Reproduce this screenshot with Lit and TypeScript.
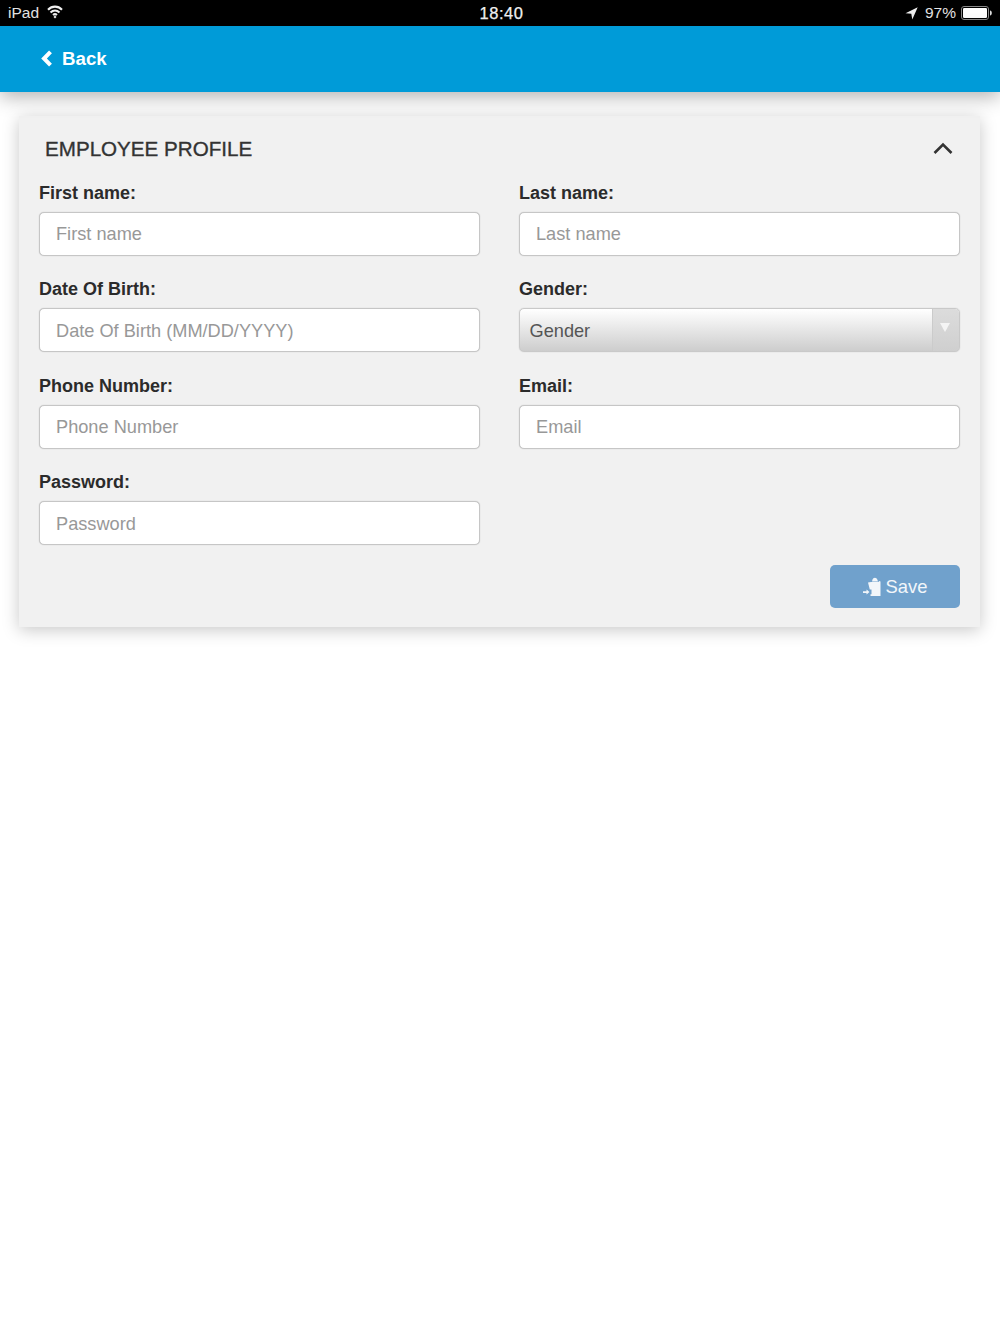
import { LitElement, html, css } from "lit";
import { customElement } from "lit/decorators.js";

const fields = [
  { label: "First name:", ph: "First name" },
  { label: "Last name:", ph: "Last name" },
  { label: "Date Of Birth:", ph: "Date Of Birth (MM/DD/YYYY)" },
  { label: "Gender:", select: true, ph: "Gender" },
  { label: "Phone Number:", ph: "Phone Number" },
  { label: "Email:", ph: "Email" },
  { label: "Password:", ph: "Password" },
];

@customElement("app-root")
export class AppRoot extends LitElement {
  static styles = css`
    :host { display: block; width: 1000px; height: 1334px; background: #fff; font-family: "Liberation Sans", Arial, sans-serif; color: #333; overflow: hidden; }
    * { box-sizing: border-box; }
    svg { display: block; }
    .status { height: 26px; background: #000; color: #e4e4e4; display: flex; align-items: center; justify-content: space-between; padding: 0 8px; position: relative; font-size: 15.5px; }
    .status .left, .status .right { display: flex; align-items: center; }
    .status .left { gap: 8px; }
    .status .time { position: absolute; left: 3px; right: 0; text-align: center; font-size: 16.5px; letter-spacing: .5px; color: #f2f2f2; -webkit-text-stroke: .25px #f2f2f2; }
    .status .right { gap: 7px; }
    .header { height: 66px; background: #009bd8; display: flex; align-items: center; padding-left: 40px; gap: 9px; color: #fff; font-weight: 700; font-size: 18.7px; box-shadow: 0 5px 18px rgba(0,0,0,.3); position: relative; }
    .card { margin: 24px 20px 0 19px; height: 511px; background: #f1f1f1; box-shadow: 0 3px 16px rgba(0,0,0,.22); padding: 0 20px; display: flex; flex-direction: column; }
    .title { height: 64.75px; flex: none; padding: 1px 7px 0 6px; display: flex; align-items: center; justify-content: space-between; font-size: 20.6px; color: #333; -webkit-text-stroke: .35px #333; }
    .grid { display: grid; grid-template-columns: 441px 441px; column-gap: 39px; row-gap: 10.5px; }
    .field { display: flex; flex-direction: column; height: 86px; }
    label { display: block; height: 31px; font-weight: 700; font-size: 18px; line-height: 24px; color: #2b2b2b; }
    .input { height: 44px; background: #fff; border: 1px solid #c6c6c6; box-shadow: 0 0 1px #b5b5b5; border-radius: 5px; padding: 2px 0 0 16px; display: flex; align-items: center; font-size: 18.2px; color: #989898; }
    .select { height: 44px; border: 1px solid #c9c9c9; box-shadow: 0 0 1px #b5b5b5; border-radius: 5px; display: flex; align-items: stretch; font-size: 18.2px; color: #555; background: linear-gradient(#fff, #cdcdcd); overflow: hidden; }
    .select .value { flex: 1; padding: 2px 0 0 9.5px; display: flex; align-items: center; }
    .select .arrow { width: 27px; flex: none; border-left: 1px solid #cbcbcb; background: linear-gradient(#dcdcdc, #cfcfcf); padding: 14px 0 0 7px; }
    .footer { display: flex; justify-content: flex-end; margin-top: 8.75px; }
    .save { width: 130px; height: 43px; background: #70a1cc; border-radius: 5px; color: #f2f6fa; font-size: 18.4px; display: flex; align-items: center; justify-content: center; gap: 5px; }
  `;

  render() {
    return html`
      <div class="status">
        <div class="left">
          <span>iPad</span>
          <svg width="16" height="14" viewBox="0 0 16 14" fill="none" stroke="#f0f0f0" stroke-width="2.100" style="margin-top:-2px">
            <path d="M1 4.800C5 .6 11 .6 15 4.800" />
            <path d="M3.500 7.500c2.700-2.500 6.300-2.500 9 0" />
            <path d="M6 10c1.200-1 2.800-1 4 0" />
            <path d="M8 10.600 6.500 12 8 13.400 9.500 12Z" fill="#f0f0f0" stroke="none" />
          </svg>
        </div>
        <div class="time">18:40</div>
        <div class="right">
          <svg width="13" height="13" viewBox="0 0 13 13"><path d="M12.700 .3 .5 6.300l5.800.4 1 5.800Z" fill="#eee" /></svg>
          <span>97%</span>
          <svg width="31" height="14" viewBox="0 0 31 14" style="margin-left:-2px">
            <rect x=".5" y=".5" width="27" height="13" rx="2.500" fill="none" stroke="#888" />
            <rect x="2" y="2" width="24" height="10" rx="1.200" fill="#fff" />
            <path d="M29 4.500c1.200.2 1.800 1.200 1.800 2.500s-.6 2.300-1.800 2.500Z" fill="#ddd" />
          </svg>
        </div>
      </div>
      <div class="header">
        <svg width="13" height="17" viewBox="0 0 13 17" fill="none" stroke="#fff" stroke-width="4" style="margin-top:-2px"><path d="M10.500 1.800 4 8.500l6.500 6.700" /></svg>
        <span>Back</span>
      </div>
      <div class="card">
        <div class="title">
          <span>EMPLOYEE PROFILE</span>
          <svg width="20" height="13" viewBox="0 0 20 13" fill="none" stroke="#333" stroke-width="2.600" style="margin-top:-1px"><path d="M1.500 11 10 2.500l8.500 8.500" /></svg>
        </div>
        <div class="grid">
          ${fields.map(
            (f) => html`
              <div class="field">
                <label>${f.label}</label>
                ${f.select
                  ? html`<div class="select">
                      <div class="value">${f.ph}</div>
                      <div class="arrow">
                        <svg width="10" height="9" viewBox="0 0 10 9"><path d="M0 0h10L5 9Z" fill="#f4f4f4" /></svg>
                      </div>
                    </div>`
                  : html`<div class="input">${f.ph}</div>`}
              </div>
            `
          )}
        </div>
        <div class="footer">
          <div class="save">
            <svg width="18" height="19" viewBox="0 0 18 19" fill="#f2f6fa">
              <path d="M9 4.500 9.500 2.600a2.500 2.500 0 0 1 4.800 0L15 4.500Z" />
              <path d="M5 5.500 8 5h7.500l.6-1L17.500 4.500V19H7.500v-1.800H8.500v-4.800H6.800Z" />
              <path d="M0 14.200h3.500v-1.800L6.500 15 3.500 17.600v-1.700H0Z" />
            </svg>
            <span>Save</span>
          </div>
        </div>
      </div>
    `;
  }
}
